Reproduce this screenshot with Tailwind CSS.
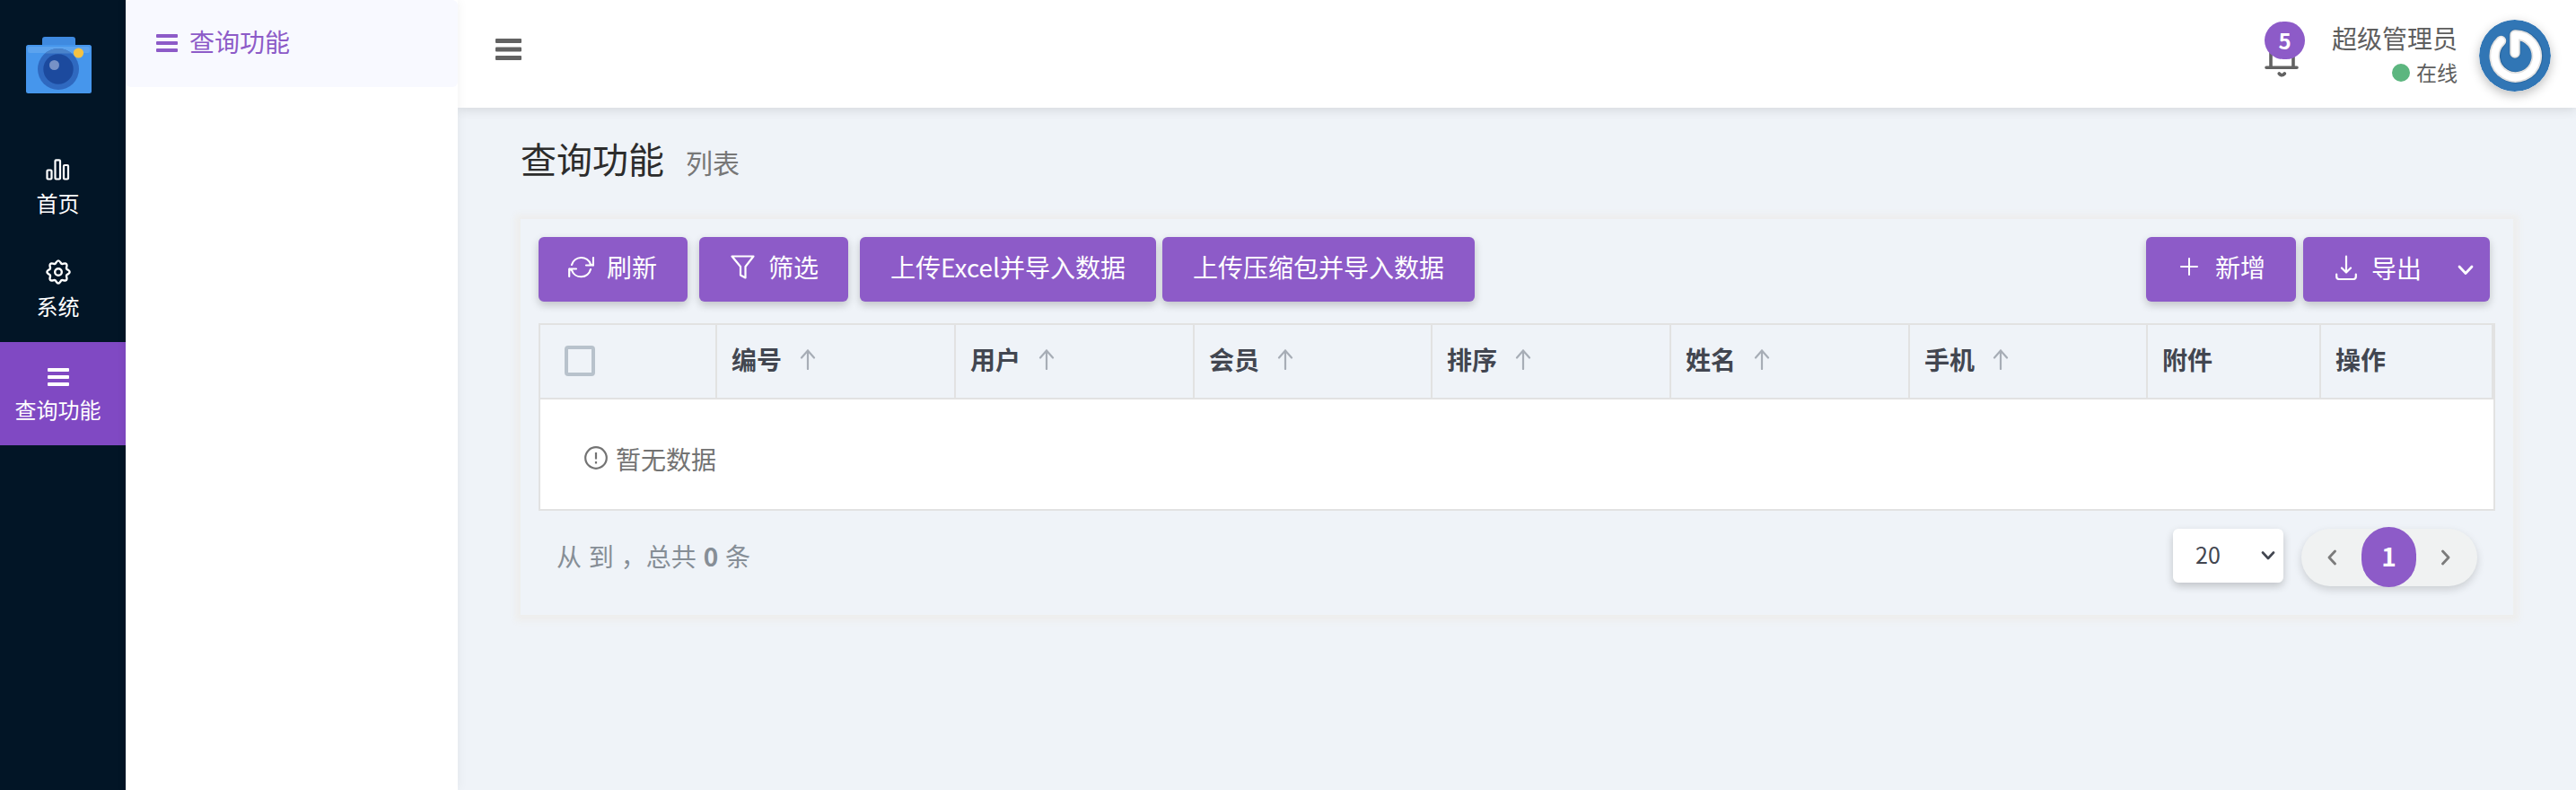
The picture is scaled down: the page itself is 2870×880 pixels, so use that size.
<!DOCTYPE html>
<html lang="zh-CN">
<head>
  <meta charset="UTF-8">
  <meta name="viewport" content="width=device-width, initial-scale=1.0">
  <title>查询功能</title>
  <script src="https://cdn.jsdelivr.net/npm/@tailwindcss/browser@4"></script>
</head>
<body class="flex h-screen overflow-hidden bg-[#eff3f8] font-['Noto_Sans_CJK_SC',sans-serif] text-[28px] leading-none text-[#5e5e5e]">

  <!-- Main menu -->
  <aside class="flex w-[140px] shrink-0 flex-col bg-[#021526] text-2xl leading-none text-white">
    <div class="flex h-[151px] justify-center pt-[41px]">
      <svg class="ml-[-8px] h-[64px] w-[74px]" viewBox="0 0 74 64">
        <rect x="18" y="0" width="37" height="14" rx="3" fill="#3f8ae0"/>
        <rect x="0" y="9" width="73" height="54" rx="2.5" fill="#4696ec"/>
        <rect x="2" y="11" width="69" height="7" rx="2" fill="#5ca3ee"/>
        <circle cx="36" cy="36" r="23" fill="#2f69c0"/>
        <path d="M21 18.500a23 23 0 0 1 30 0z" fill="#4a83cb"/>
        <circle cx="36" cy="36" r="16.700" fill="#1c4a9e"/>
        <circle cx="31.500" cy="31.500" r="5.500" fill="#7791c6"/>
        <circle cx="58.500" cy="18" r="5.600" fill="#f5c242"/>
      </svg>
    </div>
    <nav>
      <a class="flex h-[115px] flex-col items-center pr-[11px] pt-[26px]">
        <svg class="h-6 w-[27px]" viewBox="0 0 27 24" fill="none" stroke="#fff" stroke-width="2.200">
          <rect x="1.500" y="12.500" width="5" height="10" rx="1"/>
          <rect x="10.500" y="1.300" width="5.500" height="21.200" rx="1"/>
          <rect x="20" y="7" width="5" height="15.500" rx="1"/>
        </svg>
        <span class="mt-[13px]">首页</span>
      </a>
      <a class="flex h-[115px] flex-col items-center pr-[11px] pt-[23px]">
        <svg class="h-7 w-7" viewBox="0 0 28 28" fill="none" stroke="#fff" stroke-width="2.400" stroke-linejoin="round">
          <path d="M11.600 3.300Q14 -.6 16.400 3.300Q17.400 5.800 19.900 4.700Q24.400 3.600 23.300 8.100Q22.200 10.600 24.700 11.600Q28.600 14 24.700 16.400Q22.200 17.400 23.300 19.900Q24.400 24.400 19.900 23.300Q17.400 22.200 16.400 24.700Q14 28.600 11.600 24.700Q10.600 22.200 8.100 23.300Q3.600 24.400 4.700 19.900Q5.800 17.400 3.300 16.400Q-.6 14 3.300 11.600Q5.800 10.600 4.700 8.100Q3.600 3.600 8.100 4.700Q10.600 5.800 11.600 3.300Z"/>
          <circle cx="14" cy="14" r="3.800"/>
        </svg>
        <span class="mt-3">系统</span>
      </a>
      <a class="flex h-[115px] flex-col items-center bg-[#8049c3] pr-[11px] pt-[29px]">
        <svg class="h-5 w-6" viewBox="0 0 24 20" fill="#fff">
          <rect width="24" height="4" rx="1"/><rect y="8" width="24" height="4" rx="1"/><rect y="16" width="24" height="4" rx="1"/>
        </svg>
        <span class="mt-3.5">查询功能</span>
      </a>
    </nav>
  </aside>

  <!-- Submenu -->
  <aside class="relative z-10 w-[370px] shrink-0 bg-white shadow-[0_0_12px_rgba(0,0,0,0.06)]">
    <a class="flex h-[97px] items-center gap-[13px] rounded-md bg-[#f8f9ff] pb-0.5 pl-[34px] text-[#8d5bc8]">
      <svg class="h-5 w-6" viewBox="0 0 24 20" fill="currentColor">
        <rect width="24" height="4" rx="1"/><rect y="8" width="24" height="4" rx="1"/><rect y="16" width="24" height="4" rx="1"/>
      </svg>
      <span class="pb-1">查询功能</span>
    </a>
  </aside>

  <div class="flex flex-1 flex-col">
    <header class="flex h-[120px] items-center justify-between bg-white pl-[42px] pr-7 shadow-[0_2px_12px_rgba(0,0,0,0.12)]">
      <svg class="mb-2.5 h-6 w-[29px]" viewBox="0 0 29 24" fill="#626262">
        <rect width="29" height="5" rx="1"/><rect y="9.500" width="29" height="5" rx="1"/><rect y="19" width="29" height="5" rx="1"/>
      </svg>
      <div class="flex h-full">
        <div class="relative mr-[37px] mt-6 h-[62px] w-[38px]">
          <svg class="h-[62px] w-[38px]" viewBox="0 0 38 62" fill="none" stroke="#626262" stroke-width="3.600" stroke-linecap="round">
            <path d="M2 51.200H36M7 50V34a12.500 12.500 0 0 1 25 0V50M16.300 58q3 3.600 6 0"/>
          </svg>
          <span class="absolute left-0 top-0 flex h-[42px] w-[45px] items-center justify-center rounded-[21px] bg-[#8d5bc8] text-2xl leading-none font-bold text-white">5</span>
        </div>
        <div class="mr-6 flex flex-col items-end pt-7">
          <span>超级管理员</span>
          <span class="mt-[13px] flex items-center gap-[7px] text-[23px] leading-none"><i class="h-5 w-5 rounded-full bg-[#5cb67f]"></i>在线</span>
        </div>
        <svg class="mt-[22px] h-20 w-20 rounded-full shadow-[0_4px_12px_rgba(0,0,0,0.25)]" viewBox="0 0 80 80">
          <circle cx="40" cy="40" r="40" fill="#3176b5"/>
          <path d="M24.500 24A23.500 23.500 0 1 0 40 17V37" fill="none" stroke="#1d4c78" stroke-opacity=".35" stroke-width="13" stroke-linecap="round" stroke-linejoin="round"/>
          <path d="M24.500 23.500A23.500 23.500 0 1 0 40 17V37" fill="none" stroke="#e2e2e2" stroke-width="11.500" stroke-linecap="round" stroke-linejoin="round"/>
          <path d="M24.500 23.500A23.500 23.500 0 1 0 40 17V37" fill="none" stroke="#fff" stroke-width="8" stroke-linecap="round" stroke-linejoin="round"/>
        </svg>
      </div>
    </header>

    <main class="px-[70px] pt-9">
      <div class="flex h-[88px] items-start gap-6">
        <h1 class="text-[40px] leading-none text-[#2c2c2c]">查询功能</h1>
        <small class="pt-[9px] text-[30px] leading-none text-[#777]">列表</small>
      </div>

      <section class="h-[441px] p-5 shadow-[0_1px_7px_6px_#eeeeed]">
        <!-- Toolbar -->
        <div class="flex h-[72px] pr-1.5 text-white">
          <button class="mr-[13px] flex w-[166px] items-center gap-3.5 rounded-md bg-[#8d5bc8] pb-1.5 pl-[33px] shadow-[0_4px_10px_rgba(0,0,0,0.2)]">
            <svg class="h-[29px] w-[29px]" viewBox="0 0 29 29" fill="none" stroke="#fff" stroke-width="2.200" stroke-linecap="round" stroke-linejoin="round">
              <path d="M4 12A11 11 0 0 1 25 11.500L27.500 12.500M28 4V12.500H20M25 17A11 11 0 0 1 4 18L1.500 16.500M1.200 25V16.500H9"/>
            </svg>
            刷新
          </button>
          <button class="mr-[13px] flex w-[166px] items-center gap-[15px] rounded-md bg-[#8d5bc8] pb-1.5 pl-[35px] shadow-[0_4px_10px_rgba(0,0,0,0.2)]">
            <svg class="h-[27px] w-[27px]" viewBox="0 0 27 27" fill="none" stroke="#fff" stroke-width="2.200" stroke-linejoin="round">
              <path d="M1.500 1.500H25.500L16.500 13V25.500L11 22.500V13Z"/>
            </svg>
            筛选
          </button>
          <button class="mr-[7px] w-[330px] rounded-md bg-[#8d5bc8] pb-1.5 shadow-[0_4px_10px_rgba(0,0,0,0.2)]">上传Excel并导入数据</button>
          <button class="w-[348px] rounded-md bg-[#8d5bc8] pb-1.5 shadow-[0_4px_10px_rgba(0,0,0,0.2)]">上传压缩包并导入数据</button>
          <button class="ml-auto mr-2 flex w-[167px] items-center gap-[19px] rounded-md bg-[#8d5bc8] pb-1.5 pl-[38px] shadow-[0_4px_10px_rgba(0,0,0,0.2)]">
            <svg class="h-5 w-5" viewBox="0 0 20 20" stroke="#fff" stroke-width="2" stroke-linecap="round"><path d="M10 1V19M1 10H19"/></svg>
            新增
          </button>
          <button class="flex w-[208px] items-center rounded-md bg-[#8d5bc8] pb-1 pl-9 shadow-[0_4px_10px_rgba(0,0,0,0.2)]">
            <svg class="h-7 w-6" viewBox="0 0 24 28" fill="none" stroke="#fff" stroke-width="2.200" stroke-linecap="round" stroke-linejoin="round">
              <path d="M12 1.500V19M7 14.500L12 19.500L17 14.500M1.200 21.500V24a3 3 0 0 0 3 3H19.800a3 3 0 0 0 3-3V21.500"/>
            </svg>
            <span class="ml-4">导出</span>
            <svg class="ml-10 mt-1.5 h-3 w-[18px]" viewBox="0 0 18 12" fill="none" stroke="#fff" stroke-width="2.800" stroke-linecap="round" stroke-linejoin="round"><path d="M2 2L9 9.500L16 2"/></svg>
          </button>
        </div>

        <table class="mt-6 w-[2180px] table-fixed border-separate border-spacing-0 border-2 border-[#e2e2e2] text-left">
          <thead>
            <tr class="text-[#424650]">
              <th class="h-[83px] w-[197px] border-r-2 border-b-2 border-[#e2e2e2] pl-[27px]"><div class="mb-0.5 h-[34px] w-[34px] rounded border-4 border-[#b8c2cc]"></div></th>
              <th class="w-[266px] border-r-2 border-b-2 border-[#e2e2e2] pb-1.5 pl-4"><div class="flex items-center gap-5">编号<svg class="mt-0.5 h-[23px] w-[18px]" viewBox="0 0 18 23" fill="none" stroke="#a7adb6" stroke-width="2.200" stroke-linecap="round"><path d="M9 22V2M2 9.500L9 1.500L16 9.500"/></svg></div></th>
              <th class="w-[266px] border-r-2 border-b-2 border-[#e2e2e2] pb-1.5 pl-4"><div class="flex items-center gap-5">用户<svg class="mt-0.5 h-[23px] w-[18px]" viewBox="0 0 18 23" fill="none" stroke="#a7adb6" stroke-width="2.200" stroke-linecap="round"><path d="M9 22V2M2 9.500L9 1.500L16 9.500"/></svg></div></th>
              <th class="w-[265px] border-r-2 border-b-2 border-[#e2e2e2] pb-1.5 pl-4"><div class="flex items-center gap-5">会员<svg class="mt-0.5 h-[23px] w-[18px]" viewBox="0 0 18 23" fill="none" stroke="#a7adb6" stroke-width="2.200" stroke-linecap="round"><path d="M9 22V2M2 9.500L9 1.500L16 9.500"/></svg></div></th>
              <th class="w-[266px] border-r-2 border-b-2 border-[#e2e2e2] pb-1.5 pl-4"><div class="flex items-center gap-5">排序<svg class="mt-0.5 h-[23px] w-[18px]" viewBox="0 0 18 23" fill="none" stroke="#a7adb6" stroke-width="2.200" stroke-linecap="round"><path d="M9 22V2M2 9.500L9 1.500L16 9.500"/></svg></div></th>
              <th class="w-[266px] border-r-2 border-b-2 border-[#e2e2e2] pb-1.5 pl-4"><div class="flex items-center gap-5">姓名<svg class="mt-0.5 h-[23px] w-[18px]" viewBox="0 0 18 23" fill="none" stroke="#a7adb6" stroke-width="2.200" stroke-linecap="round"><path d="M9 22V2M2 9.500L9 1.500L16 9.500"/></svg></div></th>
              <th class="w-[265px] border-r-2 border-b-2 border-[#e2e2e2] pb-1.5 pl-4"><div class="flex items-center gap-5">手机<svg class="mt-0.5 h-[23px] w-[18px]" viewBox="0 0 18 23" fill="none" stroke="#a7adb6" stroke-width="2.200" stroke-linecap="round"><path d="M9 22V2M2 9.500L9 1.500L16 9.500"/></svg></div></th>
              <th class="w-[193px] border-r-2 border-b-2 border-[#e2e2e2] pb-1.5 pl-4">附件</th>
              <th class="border-r-2 border-b-2 border-[#e2e2e2] pb-1.5 pl-4">操作</th>
            </tr>
          </thead>
          <tbody>
            <tr>
              <td colspan="9" class="h-[122px] bg-white pt-[9px] pb-0 pl-[49px] text-[#737373]">
                <div class="flex items-center gap-[9px]">
                  <svg class="mb-0.5 h-[26px] w-[26px]" viewBox="0 0 26 26" fill="none" stroke="#737373" stroke-width="2.200"><circle cx="13" cy="13" r="11.800"/><path d="M13 7V14.500M13 17V19.500"/></svg>
                  暂无数据
                </div>
              </td>
            </tr>
          </tbody>
        </table>

        <!-- Pagination -->
        <div class="flex justify-between pl-5 pr-5 pt-5">
          <p class="pt-4 leading-none [word-spacing:1.6px] text-[#868e96]">从 到 ，总共 <b>0</b> 条</p>
          <div class="flex gap-5">
            <div class="flex h-[60px] w-[123px] items-center justify-between rounded-md bg-white pl-[25px] pr-[9px] text-[25px] leading-none text-[#424650] shadow-[0_4px_10px_rgba(0,0,0,0.2)]">
              <span class="pb-1">20</span>
              <svg class="h-2.5 w-4" viewBox="0 0 16 10" fill="none" stroke="#424650" stroke-width="2.600" stroke-linecap="round" stroke-linejoin="round"><path d="M2 1.500L8 8L14 1.500"/></svg>
            </div>
            <div class="flex h-16 w-[196px] items-center justify-between rounded-full bg-[#f0f2f2] pl-[29px] pr-[30px] shadow-[0_4px_10px_rgba(0,0,0,0.15)]">
              <svg class="h-[18px] w-2.5" viewBox="0 0 10 18" fill="none" stroke="#7b7b7b" stroke-width="2.800" stroke-linecap="round" stroke-linejoin="round"><path d="M8.500 2L2 9L8.500 16"/></svg>
              <span class="-mt-px flex h-[67px] w-[61px] shrink-0 items-center justify-center rounded-full bg-[#8d5bc8] pb-1 font-bold text-white">1</span>
              <svg class="h-[18px] w-2.5" viewBox="0 0 10 18" fill="none" stroke="#7b7b7b" stroke-width="2.800" stroke-linecap="round" stroke-linejoin="round"><path d="M1.500 2L8 9L1.500 16"/></svg>
            </div>
          </div>
        </div>
      </section>
    </main>
  </div>

</body>
</html>
